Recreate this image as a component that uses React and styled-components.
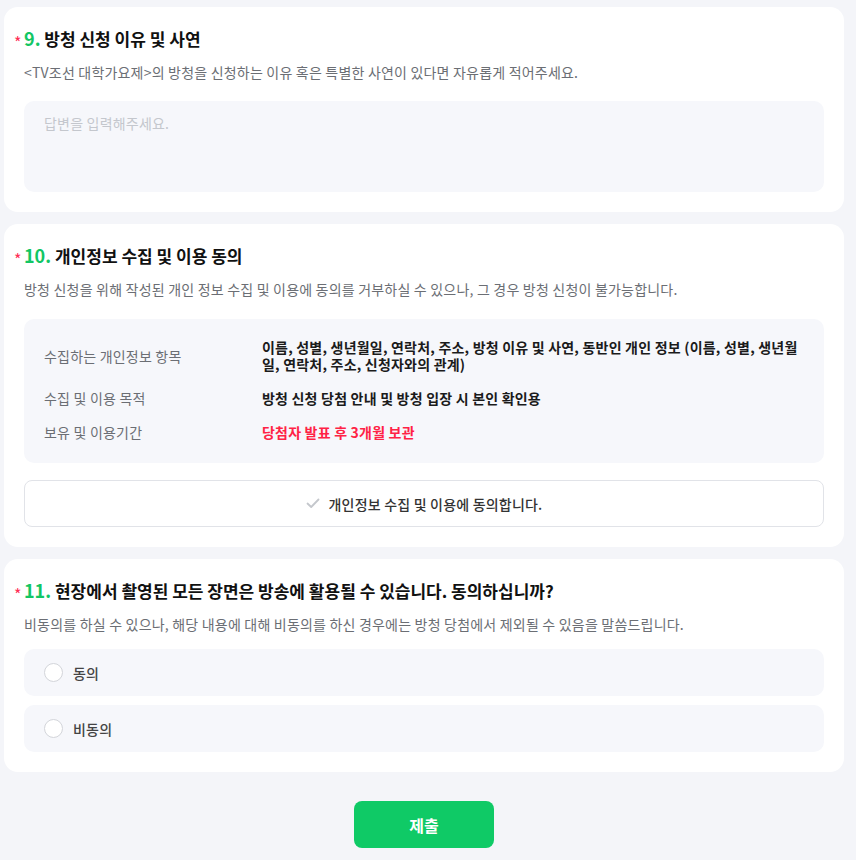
import React from "react";
import styled, { createGlobalStyle } from "styled-components";

const GlobalStyle = createGlobalStyle`
  body {
    margin: 0;
    background: #f4f5f9;
    font-family: "Noto Sans CJK KR", "Noto Sans", sans-serif;
    color: #222;
  }
  * { box-sizing: border-box; }
`;

const infoRows = [
  {
    label: "수집하는 개인정보 항목",
    value:
      "이름, 성별, 생년월일, 연락처, 주소, 방청 이유 및 사연, 동반인 개인 정보 (이름, 성별, 생년월일, 연락처, 주소, 신청자와의 관계)",
  },
  { label: "수집 및 이용 목적", value: "방청 신청 당첨 안내 및 방청 입장 시 본인 확인용" },
  { label: "보유 및 이용기간", value: "당첨자 발표 후 3개월 보관", red: true },
];

const Question = ({ num, title, desc, children }) => (
  <Card>
    <Title>
      <Star>*</Star>
      <Num>{num}.</Num> {title}
    </Title>
    <Desc>{desc}</Desc>
    {children}
  </Card>
);

const App = () => {
  return (
    <>
      <GlobalStyle />
      <Page>
        <Question
          num={9}
          title="방청 신청 이유 및 사연"
          desc="<TV조선 대학가요제>의 방청을 신청하는 이유 혹은 특별한 사연이 있다면 자유롭게 적어주세요."
        >
          <Answer placeholder="답변을 입력해주세요." />
        </Question>

        <Question
          num={10}
          title="개인정보 수집 및 이용 동의"
          desc="방청 신청을 위해 작성된 개인 정보 수집 및 이용에 동의를 거부하실 수 있으나, 그 경우 방청 신청이 불가능합니다."
        >
          <InfoBox>
            {infoRows.map((row) => (
              <React.Fragment key={row.label}>
                <InfoLabel>{row.label}</InfoLabel>
                <InfoValue $red={row.red}>{row.value}</InfoValue>
              </React.Fragment>
            ))}
          </InfoBox>
          <AgreeButton type="button">
            <svg width="14" height="11" viewBox="0 0 14 11" fill="none">
              <path d="M1.5 5.5L5.2 9L12.5 1.5" stroke="#c4c7cc" strokeWidth="1.8" strokeLinecap="round" strokeLinejoin="round" />
            </svg>
            개인정보 수집 및 이용에 동의합니다.
          </AgreeButton>
        </Question>

        <Question
          num={11}
          title="현장에서 촬영된 모든 장면은 방송에 활용될 수 있습니다. 동의하십니까?"
          desc="비동의를 하실 수 있으나, 해당 내용에 대해 비동의를 하신 경우에는 방청 당첨에서 제외될 수 있음을 말씀드립니다."
        >
          <Options>
            {["동의", "비동의"].map((opt) => (
              <Option key={opt}>
                <Radio />
                {opt}
              </Option>
            ))}
          </Options>
        </Question>

        <Footer>
          <Submit type="button">제출</Submit>
        </Footer>
      </Page>
    </>
  );
};

const Page = styled.main`
  display: flex;
  flex-direction: column;
  gap: 12px;
  padding: 7px 12px 12px 4px;
  width: 856px;
`;

const Card = styled.section`
  background: #fff;
  border-radius: 14px;
  padding: 20px 20px 20px;
`;

const Title = styled.h2`
  margin: 0;
  font-size: 17px;
  font-weight: 700;
  line-height: 22px;
  color: #111;
`;

const Star = styled.span`
  display: inline-block;
  width: 10px;
  margin-left: -10px;
  color: #ff2d55;
  font-size: 16px;
  font-weight: 400;
  vertical-align: -3px;
`;

const Num = styled.span`
  color: #12c664;
  font-size: 18px;
`;

const Desc = styled.p`
  margin: 9px 0 0;
  font-size: 14px;
  line-height: 20px;
  letter-spacing: 0.2px;
  color: #6b6e74;
`;

const Answer = styled.textarea`
  display: block;
  width: 100%;
  height: 91px;
  margin-top: 19px;
  padding: 12px 20px;
  border: none;
  border-radius: 10px;
  background: #f6f7fb;
  resize: none;
  font-family: inherit;
  font-size: 14px;
  line-height: 20px;
  letter-spacing: 0.2px;
  outline: none;

  &::placeholder {
    color: #c4c7cd;
  }
`;

const InfoBox = styled.div`
  display: grid;
  grid-template-columns: 218px 1fr;
  row-gap: 17px;
  align-items: center;
  margin-top: 20px;
  padding: 20px 20px 22px;
  border-radius: 10px;
  background: #f6f7fb;
`;

const InfoLabel = styled.div`
  font-size: 14px;
  line-height: 17px;
  letter-spacing: 0.2px;
  color: #6b6e74;
`;

const InfoValue = styled.div`
  font-size: 14px;
  font-weight: 700;
  line-height: 17px;
  letter-spacing: 0.2px;
  color: ${(p) => (p.$red ? "#ff2245" : "#1b1b1b")};
`;

const AgreeButton = styled.button`
  display: flex;
  align-items: center;
  justify-content: center;
  gap: 9px;
  width: 100%;
  height: 47px;
  margin-top: 17px;
  border: 1px solid #e1e3e8;
  border-radius: 8px;
  background: #fff;
  font-family: inherit;
  font-size: 14px;
  font-weight: 500;
  letter-spacing: 0.2px;
  color: #333;
  cursor: pointer;
`;

const Options = styled.div`
  display: flex;
  flex-direction: column;
  gap: 9px;
  margin-top: 15px;
`;

const Option = styled.label`
  display: flex;
  align-items: center;
  gap: 10px;
  height: 47px;
  padding: 0 20px;
  border-radius: 10px;
  background: #f6f7fb;
  font-size: 14px;
  font-weight: 500;
  letter-spacing: 0.2px;
  color: #444;
  cursor: pointer;
`;

const Radio = styled.span`
  width: 19px;
  height: 19px;
  border: 1.5px solid #d3d5da;
  border-radius: 50%;
  background: #fff;
`;

const Footer = styled.div`
  display: flex;
  justify-content: center;
  padding-top: 17px;
`;

const Submit = styled.button`
  width: 140px;
  height: 47px;
  border: none;
  border-radius: 8px;
  background: #0fca66;
  color: #fff;
  font-family: inherit;
  font-size: 16px;
  font-weight: 700;
  cursor: pointer;
`;

export default App;
